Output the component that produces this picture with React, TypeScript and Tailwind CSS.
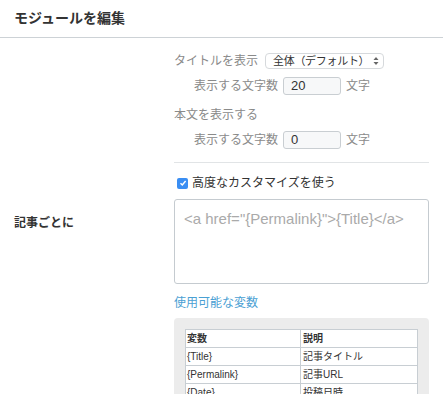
const font = { fontFamily: '"Liberation Sans", "Noto Sans CJK JP", sans-serif' }

const vars = [
  ["{Title}", "記事タイトル"],
  ["{Permalink}", "記事URL"],
  ["{Date}", "投稿日時"],
]

function CountRow({ value }: { value: string }) {
  return (
    <div className="mt-[8px] flex h-[18px] items-center pl-[20px]">
      <span className="text-[12px] text-[#8a8a8a]">表示する文字数</span>
      <div className="ml-[5px] flex h-[18px] w-[58px] items-center rounded-[3px] border border-[#c9ced2] bg-[#f7f8f9] pl-[7px] text-[13px] text-[#333]">
        {value}
      </div>
      <span className="ml-[5px] text-[12px] text-[#8a8a8a]">文字</span>
    </div>
  )
}

export default function App() {
  return (
    <div className="h-[394px] w-[443px] overflow-hidden bg-white" style={font}>
      {/* header */}
      <div className="flex h-[38px] items-center border-b border-[#cdd2d6] pl-[14px]">
        <h1 className="text-[14px] font-bold text-[#333]">モジュールを編集</h1>
      </div>

      <div className="flex">
        <div className="w-[174px] shrink-0 pl-[14px]">
          <div className="mt-[176px] text-[12px] font-bold text-[#333]">記事ごとに</div>
        </div>

        <div className="w-[255px]">
          <div className="mt-[15px] flex h-[16px] items-center">
            <span className="text-[12px] text-[#8a8a8a]">タイトルを表示</span>
            <div className="ml-[7px] flex h-[16px] w-[119px] items-center justify-between rounded-[4px] border border-[#d6d9dc] bg-white pl-[7px] pr-[4px]">
              <span className="whitespace-nowrap text-[11px] tracking-[-0.3px] text-[#333]">全体（デフォルト）</span>
              <svg width="6" height="10" viewBox="0 0 6 10" className="shrink-0">
                <path d="M3 1 L5.5 4 H0.5 Z" fill="#666" />
                <path d="M3 9 L5.5 6 H0.5 Z" fill="#666" />
              </svg>
            </div>
          </div>
          <CountRow value="20" />

          <div className="mt-[12px] flex h-[16px] items-center text-[12px] text-[#8a8a8a]">本文を表示する</div>
          <CountRow value="0" />

          <div className="mt-[13px] border-t border-[#e1e4e6]" />

          <div className="mt-[12px] flex h-[16px] items-center pl-[3px]">
            <div className="flex h-[11px] w-[11px] items-center justify-center rounded-[2px] bg-[#3a8ef3]">
              <svg width="8" height="8" viewBox="0 0 8 8">
                <path d="M1.5 4.2 L3.3 6 L6.6 2" stroke="white" strokeWidth="1.4" fill="none" />
              </svg>
            </div>
            <span className="ml-[4px] text-[12px] text-[#333]">高度なカスタマイズを使う</span>
          </div>

          <div className="mt-[8px] h-[85px] rounded-[3px] border border-[#c5cbd0] pl-[9px] pt-[8px] text-[15px] text-[#aaa]">
            {'<a href="{Permalink}">{Title}</a>'}
          </div>

          <div className="mt-[11px] flex h-[16px] items-center text-[12px] text-[#4aa0d3]">使用可能な変数</div>

          <div className="mt-[7px] rounded-[4px] bg-[#ececec] px-[11px] pt-[11px] pb-[11px]">
            <table className="w-full border-collapse bg-white text-[10px] text-[#333]">
              <thead>
                <tr className="h-[18px]">
                  <th className="w-[115px] border border-[#c8ced3] pl-[1px] text-left font-bold">変数</th>
                  <th className="border border-[#c8ced3] pl-[2px] text-left font-bold">説明</th>
                </tr>
              </thead>
              <tbody>
                {vars.map(([k, v]) => (
                  <tr key={k} className="h-[18px]">
                    <td className="border border-[#c8ced3] pl-[1px]">{k}</td>
                    <td className="border border-[#c8ced3] pl-[2px]">{v}</td>
                  </tr>
                ))}
              </tbody>
            </table>
          </div>
        </div>
      </div>
    </div>
  )
}
